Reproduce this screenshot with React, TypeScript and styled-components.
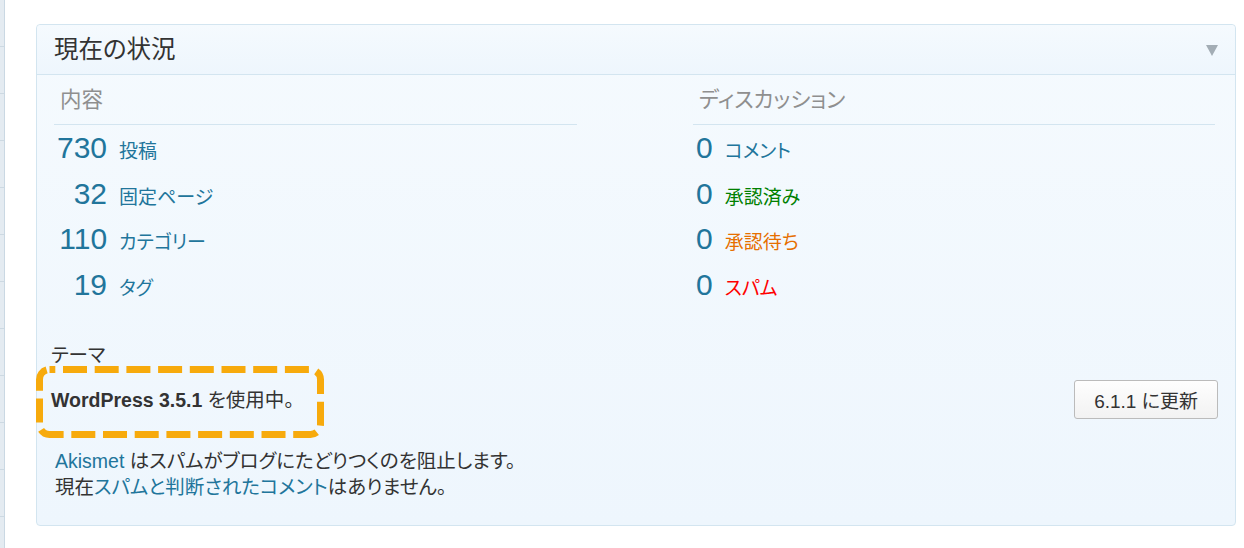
import React from "react";
import styled, { createGlobalStyle } from "styled-components";

const GlobalStyle = createGlobalStyle`
  html, body {
    margin: 0;
    padding: 0;
    background: #ffffff;
  }
  body {
    font-family: "Liberation Sans", "Noto Sans CJK JP", sans-serif;
    font-feature-settings: "palt";
    color: #333333;
  }
`;

const Page = styled.div`
  display: flex;
  align-items: flex-start;
  height: 548px;
  overflow: hidden;
`;

const SideStrip = styled.div`
  flex: none;
  width: 4px;
  height: 548px;
  border-right: 1px solid #cad8e3;
  background: repeating-linear-gradient(
    to bottom,
    #e4ebf1 0px,
    #e4ebf1 46px,
    #cdd9e2 46px,
    #cdd9e2 47px
  );
`;

const Card = styled.section`
  flex: none;
  box-sizing: border-box;
  width: 1200px;
  margin: 24px 0 0 31px;
  border: 1px solid #d3e5f0;
  border-radius: 4px;
  background: linear-gradient(to bottom, #f5fafe, #eef6fd);
`;

const CardHeader = styled.header`
  display: flex;
  align-items: center;
  justify-content: space-between;
  height: 49px;
  padding: 0 17px 0 17px;
  border-bottom: 1px solid #d3e5f0;
  background: linear-gradient(to bottom, #f5fafe, #eef6fd);
  border-radius: 4px 4px 0 0;
`;

const Title = styled.h3`
  margin: 0;
  font-size: 24.5px;
  font-weight: normal;
  line-height: 49px;
  color: #333333;
`;

const Toggle = styled.span`
  display: flex;
  align-items: center;
  padding-top: 2px;
`;

const Columns = styled.div`
  display: grid;
  grid-template-columns: 523px 522px;
  column-gap: 116px;
  padding-left: 17px;
`;

const Column = styled.div`
  display: flex;
  flex-direction: column;
`;

const ColumnTitle = styled.p`
  margin: 0;
  padding: 6px 0 5px 6px;
  font-size: 21.5px;
  line-height: 38px;
  color: #8f8f8f;
  border-bottom: 1px solid #d3e5f0;
`;

const StatTable = styled.div`
  display: grid;
  grid-template-columns: auto 1fr;
  grid-auto-rows: 45.5px;
  align-items: baseline;
  column-gap: 12px;
`;

const StatNumber = styled.span`
  padding-left: 3px;
  text-align: right;
  font-size: 30px;
  line-height: 45.5px;
  color: #21759b;
`;

type Tone = "link" | "approved" | "waiting" | "spam";

const toneColor: Record<Tone, string> = {
  link: "#21759b",
  approved: "#008000",
  waiting: "#e66f00",
  spam: "#ff0000",
};

const StatLabel = styled.span<{ $tone: Tone }>`
  font-size: 19px;
  line-height: 45.5px;
  color: ${(p) => toneColor[p.$tone]};
`;

const ThemeBlock = styled.div`
  display: flex;
  flex-direction: column;
  margin-top: 36px;
`;

const ThemeLabel = styled.p`
  margin: 0;
  padding-left: 14px;
  font-size: 19.5px;
  line-height: 24px;
  color: #333333;
`;

const ThemeRow = styled.div`
  display: flex;
  align-items: center;
  justify-content: space-between;
  height: 39px;
  margin-top: 13px;
  padding: 0 17px 0 14px;
`;

const ThemeText = styled.span`
  position: relative;
  display: inline-block;
  font-size: 19.5px;
  line-height: 26px;
  color: #333333;

  strong {
    font-weight: bold;
  }
`;

const Highlight = styled.svg`
  position: absolute;
  left: -15px;
  top: -20.5px;
  overflow: visible;
  pointer-events: none;
`;

const UpdateButton = styled.button`
  box-sizing: border-box;
  height: 39px;
  padding: 0 19px;
  border: 1px solid #bbbbbb;
  border-radius: 3px;
  background: linear-gradient(to bottom, #fefefe, #f2f2f2);
  font-family: inherit;
  font-feature-settings: "palt";
  font-size: 19px;
  color: #333333;
  cursor: pointer;
`;

const Akismet = styled.p`
  margin: 29px 0 0;
  padding: 0 0 25px 18px;
  font-size: 19.5px;
  line-height: 26px;
  color: #333333;
`;

const Link = styled.a`
  color: #21759b;
  text-decoration: none;
`;

type Stat = { value: string; label: string; tone: Tone };

const content: Stat[] = [
  { value: "730", label: "投稿", tone: "link" },
  { value: "32", label: "固定ページ", tone: "link" },
  { value: "110", label: "カテゴリー", tone: "link" },
  { value: "19", label: "タグ", tone: "link" },
];

const discussion: Stat[] = [
  { value: "0", label: "コメント", tone: "link" },
  { value: "0", label: "承認済み", tone: "approved" },
  { value: "0", label: "承認待ち", tone: "waiting" },
  { value: "0", label: "スパム", tone: "spam" },
];

function StatColumn({ title, stats }: { title: string; stats: Stat[] }) {
  return (
    <Column>
      <ColumnTitle>{title}</ColumnTitle>
      <StatTable>
        {stats.map((s) => (
          <React.Fragment key={s.label}>
            <StatNumber>{s.value}</StatNumber>
            <StatLabel $tone={s.tone}>{s.label}</StatLabel>
          </React.Fragment>
        ))}
      </StatTable>
    </Column>
  );
}

export default function App() {
  return (
    <>
      <GlobalStyle />
      <Page>
        <SideStrip />
        <Card>
          <CardHeader>
            <Title>現在の状況</Title>
            <Toggle>
              <svg width="12" height="11" viewBox="0 0 12 11">
                <polygon points="0,0 12,0 6,11" fill="#a3adb5" />
              </svg>
            </Toggle>
          </CardHeader>
          <Columns>
            <StatColumn title="内容" stats={content} />
            <StatColumn title="ディスカッション" stats={discussion} />
          </Columns>
          <ThemeBlock>
            <ThemeLabel>テーマ</ThemeLabel>
            <ThemeRow>
              <ThemeText>
                <strong>WordPress 3.5.1</strong> を使用中。
                <Highlight width="288" height="72" viewBox="0 0 288 72">
                  <rect
                    x="3.5"
                    y="3.5"
                    width="281"
                    height="65"
                    rx="10"
                    fill="none"
                    stroke="#f7aa0c"
                    strokeWidth="7"
                    strokeDasharray="24 7.7"
                    strokeDashoffset="18.2"
                  />
                </Highlight>
              </ThemeText>
              <UpdateButton>6.1.1 に更新</UpdateButton>
            </ThemeRow>
          </ThemeBlock>
          <Akismet>
            <Link href="#">Akismet</Link> はスパムがブログにたどりつくのを阻止します。
            <br />
            現在<Link href="#">スパムと判断されたコメント</Link>はありません。
          </Akismet>
        </Card>
      </Page>
    </>
  );
}
